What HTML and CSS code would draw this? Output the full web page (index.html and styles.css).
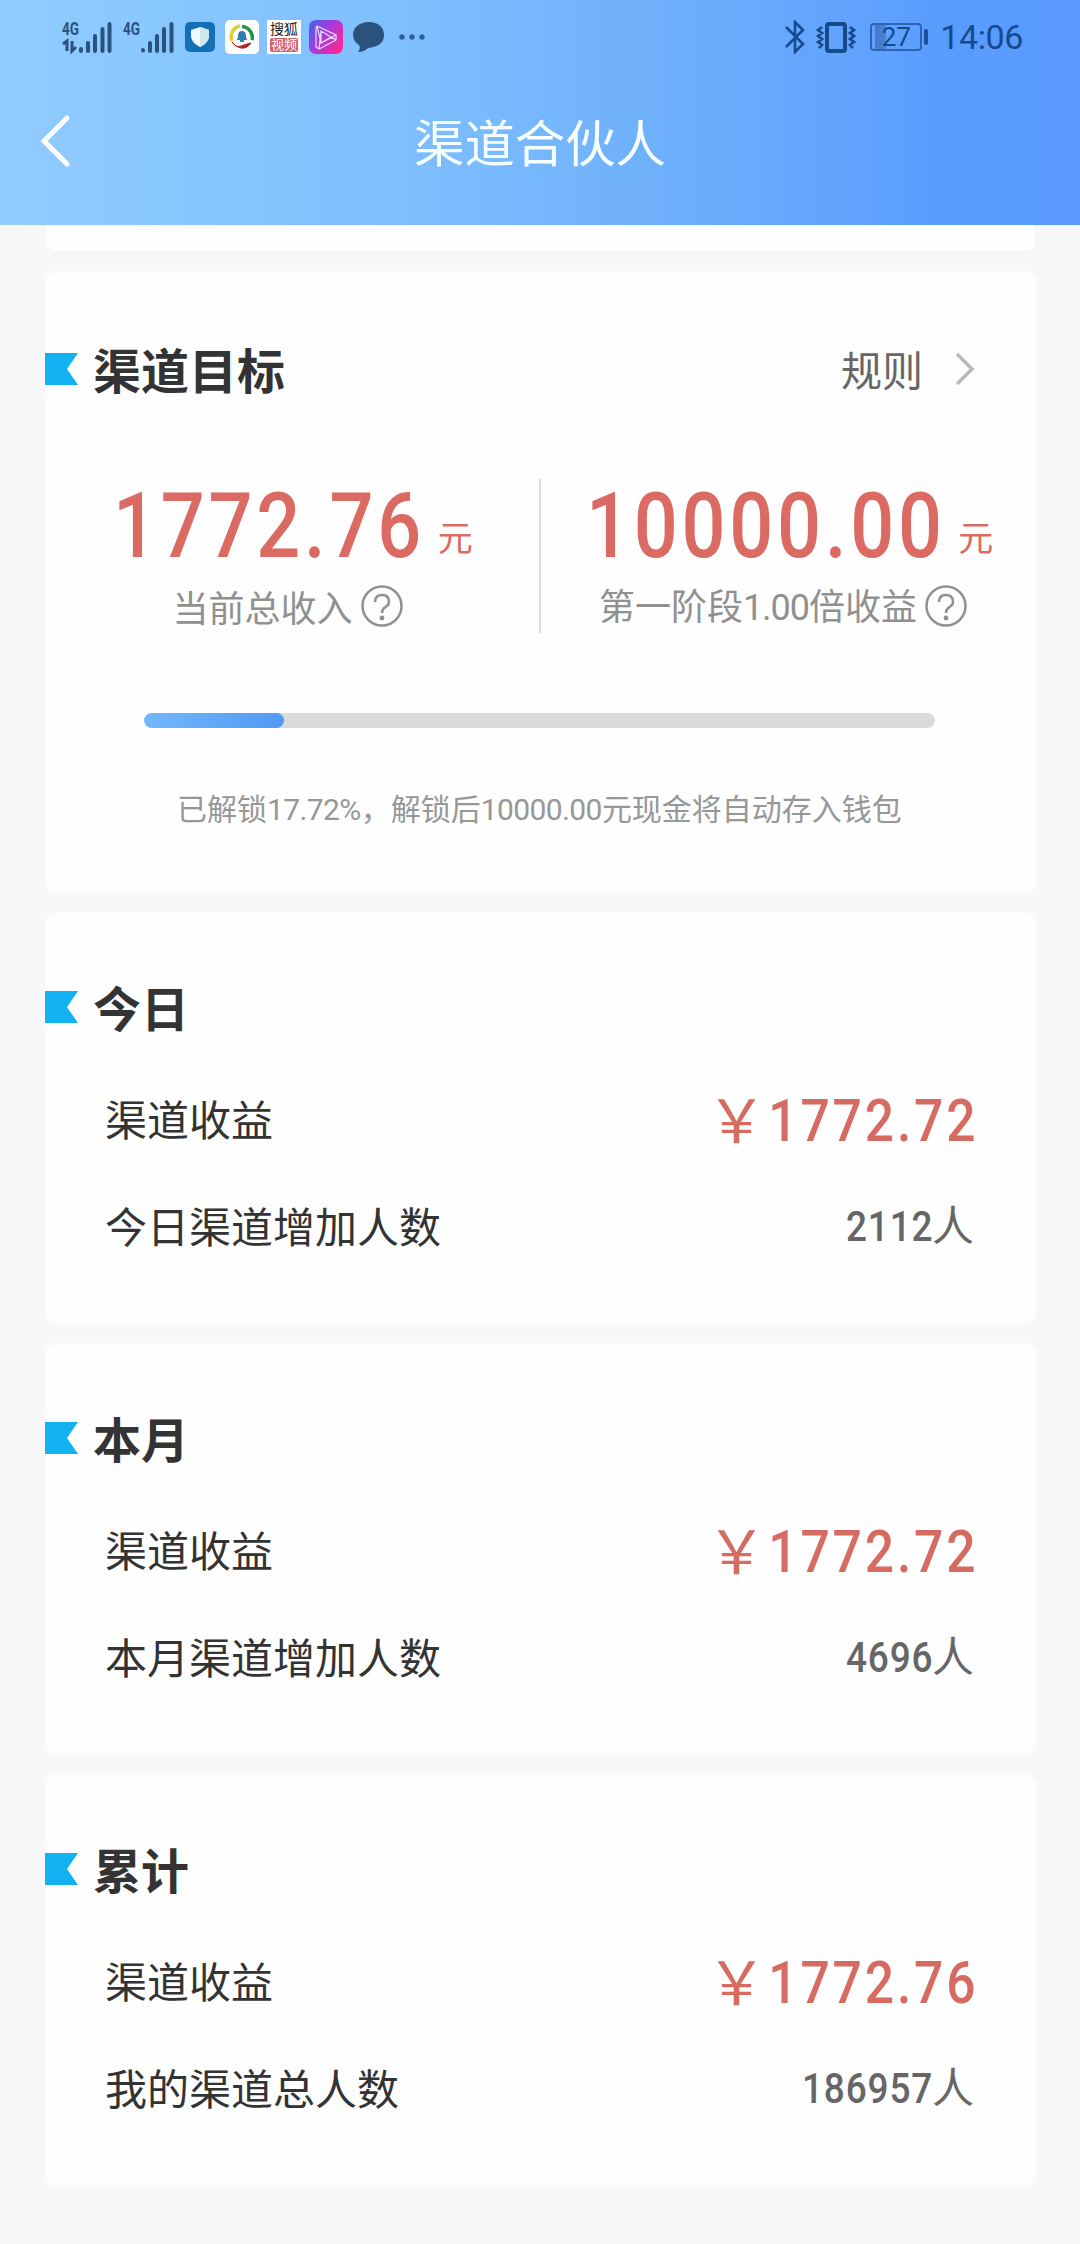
FILE: index.html
```html
<!DOCTYPE html>
<html lang="zh-CN">
<head>
<meta charset="utf-8">
<title>渠道合伙人</title>
<link rel="stylesheet" href="styles.css">
</head>
<body>
<header class="header">
  <div class="status">
    <div class="status-left">
      <svg class="signal" width="50" height="36" viewBox="0 0 50 36">
        <text class="net" x="0" y="16" textLength="17" lengthAdjust="spacingAndGlyphs">4G</text>
        <path d="M1 25L5 22V32M10 22V32L14 28" class="arrows"/>
        <path d="M19 30V32M26 24V32M33 17V32M40.500 10V32M47.500 5V32" class="bars"/>
      </svg>
      <svg class="signal signal-two" width="52" height="36" viewBox="0 0 52 36">
        <text class="net" x="0" y="16" textLength="17" lengthAdjust="spacingAndGlyphs">4G</text>
        <path d="M20 31V31.500M27 24V32M34 17V32M41 10V32M48.500 5V32" class="bars"/>
      </svg>
      <svg class="app-shield" width="30" height="30" viewBox="0 0 30 30">
        <rect width="30" height="30" rx="5" fill="#1171b4"/>
        <path d="M15 5L24 8V15Q23 21 15 25Q7 21 6 15V8Z" fill="#eefaff"/>
        <path d="M15 5L24 8V15Q23 21 15 25Z" fill="#cfe8ee"/>
      </svg>
      <svg class="app-bell" width="34" height="34" viewBox="0 0 34 34">
        <rect width="34" height="34" rx="5" fill="#fff"/>
        <g fill="none" stroke-width="3.500">
          <path d="M7 21A11 11 0 0 1 15 6" stroke="#e3cf35"/>
          <path d="M17 6.500A11 11 0 0 1 27 20" stroke="#219447"/>
          <path d="M7 22Q11 28 16 26T26 23Q22 29 16 28T7 22Z" fill="#b62328" stroke="#b62328" stroke-width="1"/>
        </g>
        <path d="M11.500 20Q13 19 13 16Q13 11 17 11T21 16Q21 19 22.500 20ZM15 20H19V22H15Z" fill="#2f7cb5"/>
      </svg>
      <div class="app-video"><span>搜狐</span><span class="app-video-tag">视频</span></div>
      <svg class="app-play" width="34" height="34" viewBox="0 0 34 34">
        <defs><linearGradient id="play" x1="0" y1="0" x2="1" y2=".7"><stop stop-color="#4063e8"/><stop offset=".5" stop-color="#a43be0"/><stop offset="1" stop-color="#fa2794"/></linearGradient></defs>
        <rect width="34" height="34" rx="7" fill="url(#play)"/>
        <path d="M8 6L27 15V20L10 29L7 27V8ZM8 6L12 23L27 15M10 29L12 11L27 20M12 11V23L22 17Z" fill="none" stroke="#efd8ff" stroke-width="1.200"/>
      </svg>
      <svg class="chat" width="32" height="32" viewBox="0 0 32 32">
        <path d="M16 1C25 1 31 6 31 14C31 23 24 26 15 27Q11 31 5 31Q8 27 6 24Q0 20 0 14C0 6 7 1 16 1Z"/>
      </svg>
      <svg class="dots" width="26" height="6" viewBox="0 0 26 6"><circle cx="3" cy="3" r="2.700"/><circle cx="13" cy="3" r="2.700"/><circle cx="23" cy="3" r="2.700"/></svg>
    </div>
    <div class="status-right">
      <svg width="20" height="34" viewBox="0 0 20 34"><path d="M1 7L18 24L10 32V2L18 10L1 27" class="line"/></svg>
      <svg class="vibrate" width="40" height="34" viewBox="0 0 40 34">
        <rect x="11" y="4" width="18" height="27" rx="2" class="line line-bold"/>
        <path d="M6 7L2 10L6 13L2 16L6 19L2 22L6 25L3 28M34 7L38 10L34 13L38 16L34 19L38 22L34 25L37 28" class="line"/>
      </svg>
      <div class="battery"><span class="battery-text">27</span></div>
      <i class="battery-tip"></i>
      <span class="time">14:06</span>
    </div>
  </div>
  <div class="nav">
    <svg class="back" width="32" height="54" viewBox="0 0 32 54"><path d="M28 4L5 27L28 50" fill="none" stroke="#fff" stroke-width="5" stroke-linecap="round"/></svg>
    <h1 class="title">渠道合伙人</h1>
  </div>
</header>

<main class="content">
  <div class="card card-peek"></div>

  <section class="card card-goal">
    <div class="head">
      <svg class="flag" width="33" height="32" viewBox="0 0 33 32"><path d="M0 0H33L22 16L33 32H0Z"/></svg>
      <h2 class="heading">渠道目标</h2>
      <span class="rule">规则</span>
      <svg class="more" width="20" height="34" viewBox="0 0 20 34"><path d="M2 2L17 17L2 32" fill="none" stroke="#b9b9b9" stroke-width="3.500"/></svg>
    </div>
    <div class="goals">
      <div class="goal">
        <div class="amount"><span class="big">1772.76</span><span class="unit">元</span></div>
        <div class="hint"><span>当前总收入</span>
          <svg class="help" width="42" height="42" viewBox="0 0 42 42"><circle cx="21" cy="21" r="19.500"/><path d="M14 17Q14 10 21 10T28 17Q28 20 24.500 22Q21 24 21 28"/><circle cx="21" cy="33" r="1.200"/></svg></div>
      </div>
      <div class="goal goal-next">
        <div class="amount"><span class="big">10000.00</span><span class="unit">元</span></div>
        <div class="hint"><span>第一阶段<span class="hint-num">1.00</span>倍收益</span>
          <svg class="help" width="42" height="42" viewBox="0 0 42 42"><circle cx="21" cy="21" r="19.500"/><path d="M14 17Q14 10 21 10T28 17Q28 20 24.500 22Q21 24 21 28"/><circle cx="21" cy="33" r="1.200"/></svg></div>
      </div>
    </div>
    <div class="track"><div class="fill" style="width: 17.72%"></div></div>
    <p class="note">已解锁<span class="note-num">17.72%</span>，解锁后<span class="note-num">10000.00</span>元现金将自动存入钱包</p>
  </section>

  <section class="card card-stat">
    <div class="head">
      <svg class="flag" width="33" height="32" viewBox="0 0 33 32"><path d="M0 0H33L22 16L33 32H0Z"/></svg>
      <h2 class="heading">今日</h2>
    </div>
    <div class="row"><span>渠道收益</span><span class="money"><span class="yen">￥</span><span class="sum">1772.72</span></span></div>
    <div class="row"><span>今日渠道增加人数</span><span class="people"><span class="count">2112</span>人</span></div>
  </section>

  <section class="card card-stat">
    <div class="head">
      <svg class="flag" width="33" height="32" viewBox="0 0 33 32"><path d="M0 0H33L22 16L33 32H0Z"/></svg>
      <h2 class="heading">本月</h2>
    </div>
    <div class="row"><span>渠道收益</span><span class="money"><span class="yen">￥</span><span class="sum">1772.72</span></span></div>
    <div class="row"><span>本月渠道增加人数</span><span class="people"><span class="count">4696</span>人</span></div>
  </section>

  <section class="card card-stat">
    <div class="head">
      <svg class="flag" width="33" height="32" viewBox="0 0 33 32"><path d="M0 0H33L22 16L33 32H0Z"/></svg>
      <h2 class="heading">累计</h2>
    </div>
    <div class="row"><span>渠道收益</span><span class="money"><span class="yen">￥</span><span class="sum">1772.76</span></span></div>
    <div class="row"><span>我的渠道总人数</span><span class="people"><span class="count">186957</span>人</span></div>
  </section>
</main>
</body>
</html>
```
FILE: styles.css
```css
* { box-sizing: border-box; }
body {
  margin: 0;
  height: 2244px;
  overflow: hidden;
  background: linear-gradient(90deg, #f7f7f7 60%, #f7f7fa);
  color: #333;
  font-family: "Noto Sans CJK SC", Roboto, sans-serif;
}
svg { display: block; flex: none; }
h1, h2, p { margin: 0; }

.header {
  height: 225px;
  background: linear-gradient(90deg, #90ccff 0%, #80c0ff 35%, #6cadfb 65%, #599cff 88%, #5a99ff 100%);
}
.status {
  height: 74px;
  display: flex;
  justify-content: space-between;
  padding: 0 57px 0 62px;
  color: #174a8c;
  font-family: Roboto, "Noto Sans CJK SC", sans-serif;
}
.status-left, .status-right { display: flex; align-items: center; }
.status-left { color: #2b527c; }
.net { font-size: 18px; font-weight: 700; fill: #2b527c; }
.bars { fill: none; stroke: #2b527c; stroke-width: 4; stroke-linecap: round; }
.arrows { fill: none; stroke: #2b527c; stroke-width: 3; }
.signal-two { margin-left: 11px; }
.app-shield { margin-left: 10px; }
.app-bell { margin-left: 10px; }
.app-video {
  width: 34px;
  height: 34px;
  margin-left: 8px;
  background: #fff;
  color: #222;
  display: flex;
  flex-direction: column;
  align-items: center;
  font-size: 14px;
  line-height: 18px;
}
.app-video-tag {
  width: 28px;
  height: 14px;
  background: #d1606e;
  color: #fff;
  border-radius: 2px;
  font-size: 13px;
  line-height: 14px;
  text-align: center;
}
.app-play { margin-left: 8px; }
.chat { margin-left: 10px; fill: #2b527c; }
.dots { margin-left: 14px; fill: #2b5fa0; }
.line { fill: none; stroke: #174a8c; stroke-width: 2.6; }
.line-bold { stroke-width: 4; }
.vibrate { margin-left: 11px; }
.battery {
  width: 52px;
  height: 28px;
  margin-left: 14px;
  border: 2px solid #2e64b0;
  border-radius: 4px;
  background: linear-gradient(90deg, transparent 3px, #4478cc 3px, #4c82d6 14px, transparent 14px);
  font-size: 26px;
  line-height: 25px;
  text-align: center;
}
.battery-tip { width: 4px; height: 16px; margin-left: 2px; border-radius: 2px; background: #1f4f9a; }
.time { margin-left: 12px; font-size: 34px; letter-spacing: -0.4px; line-height: 40px; }

.nav { height: 134px; display: flex; align-items: center; }
.back { margin-left: 39px; }
.title { margin-left: 343px; color: #f5fffe; font-size: 50.400px; font-weight: 400; line-height: 60px; }

.content { width: 989px; margin-left: 46px; display: flex; flex-direction: column; gap: 20px; }
.card { background: #fefefe; border-radius: 10px; box-shadow: 0 0 5px 1px #fbfbfb; }
.card-peek { height: 26px; border-radius: 0 0 10px 10px; box-shadow: none; }
.card-goal { height: 621px; margin-top: 1px; padding-top: 67px; }
.card-stat { height: 410px; margin-bottom: 1px; padding-top: 64px; }

.head { height: 60px; display: flex; align-items: center; }
.flag { margin-left: -1px; fill: #12b2f2; }
.heading { margin-left: 15px; font-size: 48px; font-weight: 700; line-height: 58px; padding-bottom: 2px; }
.rule { margin-left: auto; padding-bottom: 2px; color: #666; font-size: 41px; line-height: 58px; }
.more { margin: 0 60px 0 32px; }

.goals { display: grid; grid-template-columns: 493px 496px; margin-top: 80px; height: 154px; }
.goal { display: flex; flex-direction: column; align-items: center; }
.goal-next { border-left: 2px solid #dcdcdc; }
.amount { align-self: flex-start; height: 90px; margin-left: 67px; display: flex; color: #da6a62; line-height: 84px; }
.goal-next .amount { margin-left: 45px; }

/* Figures are set in a slightly condensed face with open tracking. */
.big, .sum, .count { display: inline-block; font-family: Roboto, sans-serif; }
.big {
  margin-right: -51px;
  font-size: 90px;
  font-weight: 500;
  line-height: 95px;
  letter-spacing: 4.4px;
  transform: scaleX(.86);
  transform-origin: left;
}
.goal-next .big { margin-right: -59px; }
.unit { margin-left: 13px; padding-top: 15px; font-size: 35px; }
.hint { height: 50px; margin-left: -10px; margin-top: 12px; display: flex; align-items: center; gap: 8px; color: #909090; font-size: 36px; line-height: 50px; }
.hint-num { font-family: Roboto, sans-serif; letter-spacing: -1px; }
.help { fill: none; stroke: #909090; stroke-width: 2.500; }

.track { width: 791px; height: 15px; margin: 80px 0 0 98px; border-radius: 8px; background: #dadada; overflow: hidden; }
.fill { height: 100%; border-radius: 8px; background: linear-gradient(90deg, #72b7f9, #5299f6); }
.note { margin-top: 57px; padding-left: 131px; color: #979797; font-size: 30px; line-height: 44px; white-space: nowrap; }
.note-num { font-family: Roboto, sans-serif; letter-spacing: -.6px; }

.row { height: 60px; display: flex; align-items: center; justify-content: space-between; padding: 0 61px 0 59px; font-size: 42px; line-height: 60px; }
.head + .row { margin-top: 51px; }
.row + .row { margin-top: 47px; }
.money { height: 60px; display: flex; align-items: flex-start; color: #d66b62; font-weight: 500; }
.yen { font-size: 60px; font-weight: 400; line-height: 57px; }
.sum {
  margin: 0 -4px 0 -33px;
  font-size: 60px;
  line-height: 66px;
  letter-spacing: 3.3px;
  transform: scaleX(.86);
  transform-origin: right;
}
.people { color: #666; }
.count {
  margin-right: -1px;
  font-weight: 500;
  letter-spacing: 1px;
  transform: scaleX(.88);
  transform-origin: right;
}
```
